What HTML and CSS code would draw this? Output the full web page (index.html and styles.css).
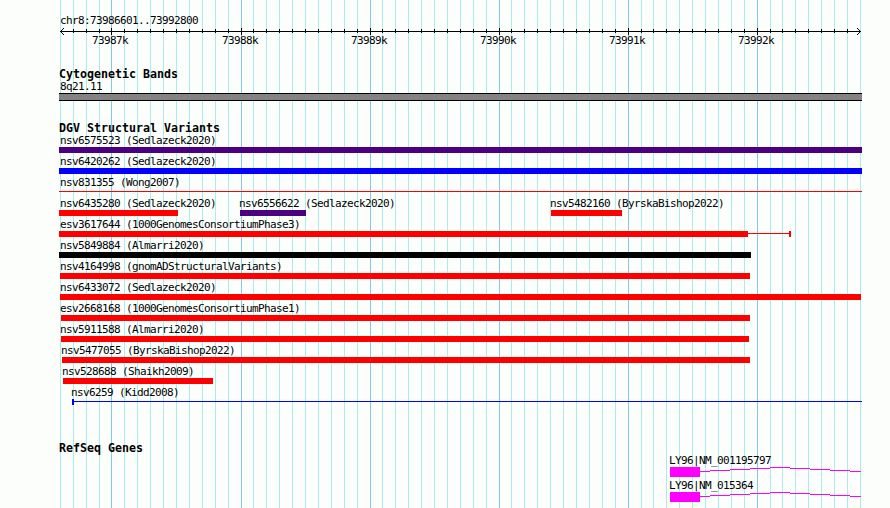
FILE: index.html
```html
<!DOCTYPE html>
<html lang="en">
  <head>
    <meta charset="UTF-8" />
    <meta name="viewport" content="width=device-width, initial-scale=1.0" />
    <title>chr8:73986601..73992800</title>
    <link rel="stylesheet" href="styles.css">
  </head>
  <body>
    <main class="browser">
      <svg class="grid" id="grid" width="890" height="508" aria-hidden="true"></svg>

      <header class="ruler">
        <div class="label">chr8:73986601..73992800</div>
        <svg class="ruler-axis" id="axis" width="890" height="9" aria-hidden="true"></svg>
        <div class="ruler-labels" id="rulerLabels"></div>
      </header>

      <section class="track track--bands">
        <h2 class="track-title">Cytogenetic Bands</h2>
        <div class="label">8q21.11</div>
        <div class="band"></div>
      </section>

      <section class="track track--variants">
        <h2 class="track-title">DGV Structural Variants</h2>
        <div id="variants"></div>
      </section>

      <section class="track track--genes">
        <h2 class="track-title">RefSeq Genes</h2>
        <div id="genes"></div>
      </section>
    </main>
    <script>
      // pixels from the left edge of the panel
      const variants = [
        [{ name: "nsv6575523 (Sedlazeck2020)", color: "indigo", start: 59, end: 862 }],
        [{ name: "nsv6420262 (Sedlazeck2020)", color: "blue", start: 59, end: 862 }],
        [{ name: "nsv831355 (Wong2007)", color: "red", start: 59, end: 59, lineEnd: 862 }],
        [
          { name: "nsv6435280 (Sedlazeck2020)", color: "red", start: 59, end: 178 },
          { name: "nsv6556622 (Sedlazeck2020)", color: "indigo", start: 240, end: 306 },
          { name: "nsv5482160 (ByrskaBishop2022)", color: "red", start: 551, end: 622 },
        ],
        [{ name: "esv3617644 (1000GenomesConsortiumPhase3)", color: "red", start: 59, end: 748, lineEnd: 791, cap: true }],
        [{ name: "nsv5849884 (Almarri2020)", color: "black", start: 59, end: 751 }],
        [{ name: "nsv4164998 (gnomADStructuralVariants)", color: "red", start: 60, end: 750 }],
        [{ name: "nsv6433072 (Sedlazeck2020)", color: "red", start: 60, end: 861 }],
        [{ name: "esv2668168 (1000GenomesConsortiumPhase1)", color: "red", start: 61, end: 750 }],
        [{ name: "nsv5911588 (Almarri2020)", color: "red", start: 61, end: 749 }],
        [{ name: "nsv5477055 (ByrskaBishop2022)", color: "red", start: 62, end: 750 }],
        [{ name: "nsv528688 (Shaikh2009)", color: "red", start: 63, end: 213 }],
        [{ name: "nsv6259 (Kidd2008)", color: "blue", start: 72, end: 74, lineEnd: 862 }],
      ];
      const genes = ["LY96|NM_001195797", "LY96|NM_015364"];

      // 800px for 6200bp, one tick per 100bp, 73987k is tick 0
      const tickX = (n) => Math.round(111.484 + n * 12.90323);

      let grid = "";
      let axis = '<path d="M60 4h801v1h-801z"/>';
      let labels = "";
      for (let n = -4; n <= 58; n++) {
        const x = tickX(n);
        const major = n % 10 === 0;
        grid += `<rect class="${major ? "major" : "minor"}" x="${x}" width="1" height="508"/>`;
        if (n > -4 && n < 58) {
          axis += `<rect x="${x}" y="${major ? 1 : 2}" width="1" height="${major ? 7 : 4}"/>`;
        }
        if (major) {
          labels += `<span class="label" style="margin-left: ${x - 19}px">${73987 + n / 10}k</span>`;
        }
      }
      axis += '<path class="head" d="M64 1L60.5 4.5L64 8M857 1L860.5 4.5L857 8"/>';
      document.getElementById("grid").innerHTML = grid;
      document.getElementById("axis").innerHTML = axis;
      document.getElementById("rulerLabels").innerHTML = labels;

      // labels never start left of the panel edge
      document.getElementById("variants").innerHTML = variants.map((row) => `
        <div class="row">
          ${row.map((v) => `
            <div class="variant ${v.color}">
              <span class="label" style="margin-left: ${Math.max(60, v.start - 1)}px">${v.name}</span>
              <div class="glyph" style="margin-left: ${v.start}px">
                <div class="bar" style="width: ${v.end - v.start}px"></div>
                ${v.lineEnd ? `<div class="line" style="width: ${v.lineEnd - v.end - (v.cap ? 2 : 0)}px"></div>` : ""}
                ${v.cap ? '<div class="bar cap"></div>' : ""}
              </div>
            </div>`).join("")}
        </div>`).join("");

      document.getElementById("genes").innerHTML = genes.map((name) => `
        <div class="gene">
          <span class="label">${name}</span>
          <div class="gene-glyph">
            <div class="exon"></div>
            <svg class="intron" width="161" height="10" aria-hidden="true">
              <path d="M0 4.5h10M10 3.5h20M30 2.5h20M50 1.5h20M70 .5h20M90 1.5h20M110 2.5h20M130 3.5h20M150 4.5h11"/>
            </svg>
          </div>
        </div>`).join("");
    </script>
  </body>
</html>
```
FILE: styles.css
```css
html {
  box-sizing: border-box;
  background: #fcfefc;
  color: #000;
}

body {
  margin: 0;
  overflow: hidden;
}

.browser {
  position: relative;
  width: 890px;
  height: 508px;
  overflow: hidden;
}

/* guide lines run behind every track */
.grid {
  position: absolute;
  top: 0;
  left: 0;
  z-index: -1;
  shape-rendering: crispEdges;
}

.grid .minor {
  fill: #acecec;
}

.grid .major {
  fill: #84cae8;
}

.label {
  display: block;
  height: 12px;
  margin-left: 60px;
  font: 11px/12px "DejaVu Sans Mono", monospace;
  letter-spacing: -0.623px;
  white-space: pre;
}

.ruler {
  padding-top: 15px;
}

.ruler-axis {
  display: block;
  shape-rendering: crispEdges;
}

.ruler-axis .head {
  fill: none;
  stroke: #000;
}

.ruler-labels {
  display: grid;
  margin-top: -1px;
}

.ruler-labels .label {
  grid-area: 1 / 1;
}

.track--bands {
  padding-top: 21px;
}

.track-title {
  height: 13px;
  margin: 0 0 0 59px;
  font: bold 11.63px/13px "DejaVu Sans Mono", monospace;
  white-space: pre;
}

.band {
  width: 803px;
  height: 6px;
  margin: 0 0 0 59px;
  border: solid #000;
  border-width: 1px 0;
  background: #848284;
}

.track--variants {
  padding-top: 21px;
}

.row {
  display: grid;
  height: 21px;
}

.variant {
  grid-area: 1 / 1;
}

.glyph {
  display: flex;
  height: 6px;
}

.bar {
  flex: none;
  height: 6px;
  background: var(--fill);
}

.cap {
  width: 2px;
}

.line {
  height: 1px;
  margin-top: 2px;
  background: var(--fill);
}

.red {
  --fill: #ff0000;
}

.blue {
  --fill: #0000ff;
}

.indigo {
  --fill: #4b0082;
}

.black {
  --fill: #000;
}

.track--genes {
  padding-top: 34px;
}

.gene {
  height: 25px;
  margin-left: 670px;
}

.gene .label {
  margin-left: -1px;
}

.gene-glyph {
  display: flex;
}

.exon {
  width: 30px;
  height: 10px;
  background: #ff00ff;
}

.intron {
  display: block;
  fill: none;
  stroke: #ff00ff;
  shape-rendering: crispEdges;
}
```
